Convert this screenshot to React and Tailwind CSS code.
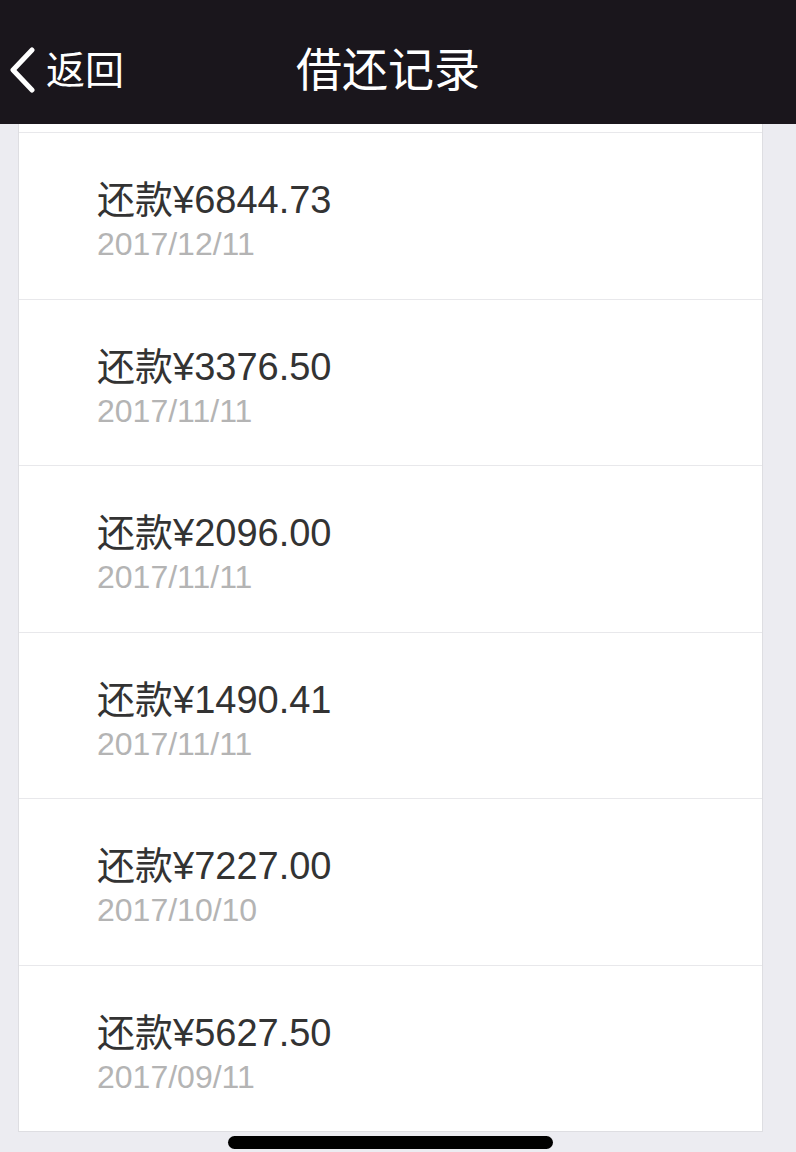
import React from 'react';

const records = [
    { amount: '6844.73', date: '2017/12/11' },
    { amount: '3376.50', date: '2017/11/11' },
    { amount: '2096.00', date: '2017/11/11' },
    { amount: '1490.41', date: '2017/11/11' },
    { amount: '7227.00', date: '2017/10/10' },
    { amount: '5627.50', date: '2017/09/11' },
];

const font = { fontFamily: '"Liberation Sans", "Noto Sans CJK SC", sans-serif' };

const App = () => {
    return (
        <div className="w-[796px] h-[1152px] bg-[#ececf1] overflow-hidden relative" style={font}>
            {/* Header */}
            <div className="h-[124px] bg-[#1a161c] flex items-center relative">
                <div className="flex items-center pl-[8px] pt-[16px]">
                    <svg width="28" height="46" viewBox="0 0 28 46" className="mr-[10px]">
                        <path d="M24 3 L5 23 L24 43" fill="none" stroke="#ffffff" strokeWidth="5" strokeLinecap="round" strokeLinejoin="round" />
                    </svg>
                    <span className="text-white text-[39px] leading-none">返回</span>
                </div>
                <div className="absolute left-0 right-0 top-0 h-full flex items-center justify-center pt-[16px] pointer-events-none">
                    <span className="text-white text-[46px] leading-none pl-[-10px] mr-[20px]">借还记录</span>
                </div>
            </div>

            {/* Card list */}
            <div className="ml-[18px] w-[745px] bg-white border-x border-b border-[#dedee2] pt-[8px]">
                {records.map((r, i) => (
                    <div
                        key={i}
                        className="h-[166.5px] border-t border-[#e8e8eb] pl-[78px] pt-[45px] box-border"
                    >
                        <div className="h-[44px] flex items-center text-[38px] text-[#333333] leading-none">
                            还款¥{r.amount}
                        </div>
                        <div className="h-[44px] flex items-center text-[32px] text-[#b4b4b4] leading-none">
                            {r.date}
                        </div>
                    </div>
                ))}
            </div>

            {/* Home indicator */}
            <div className="absolute left-[228px] top-[1136px] w-[325px] h-[13px] rounded-full bg-black" />
        </div>
    );
};

export default App;
